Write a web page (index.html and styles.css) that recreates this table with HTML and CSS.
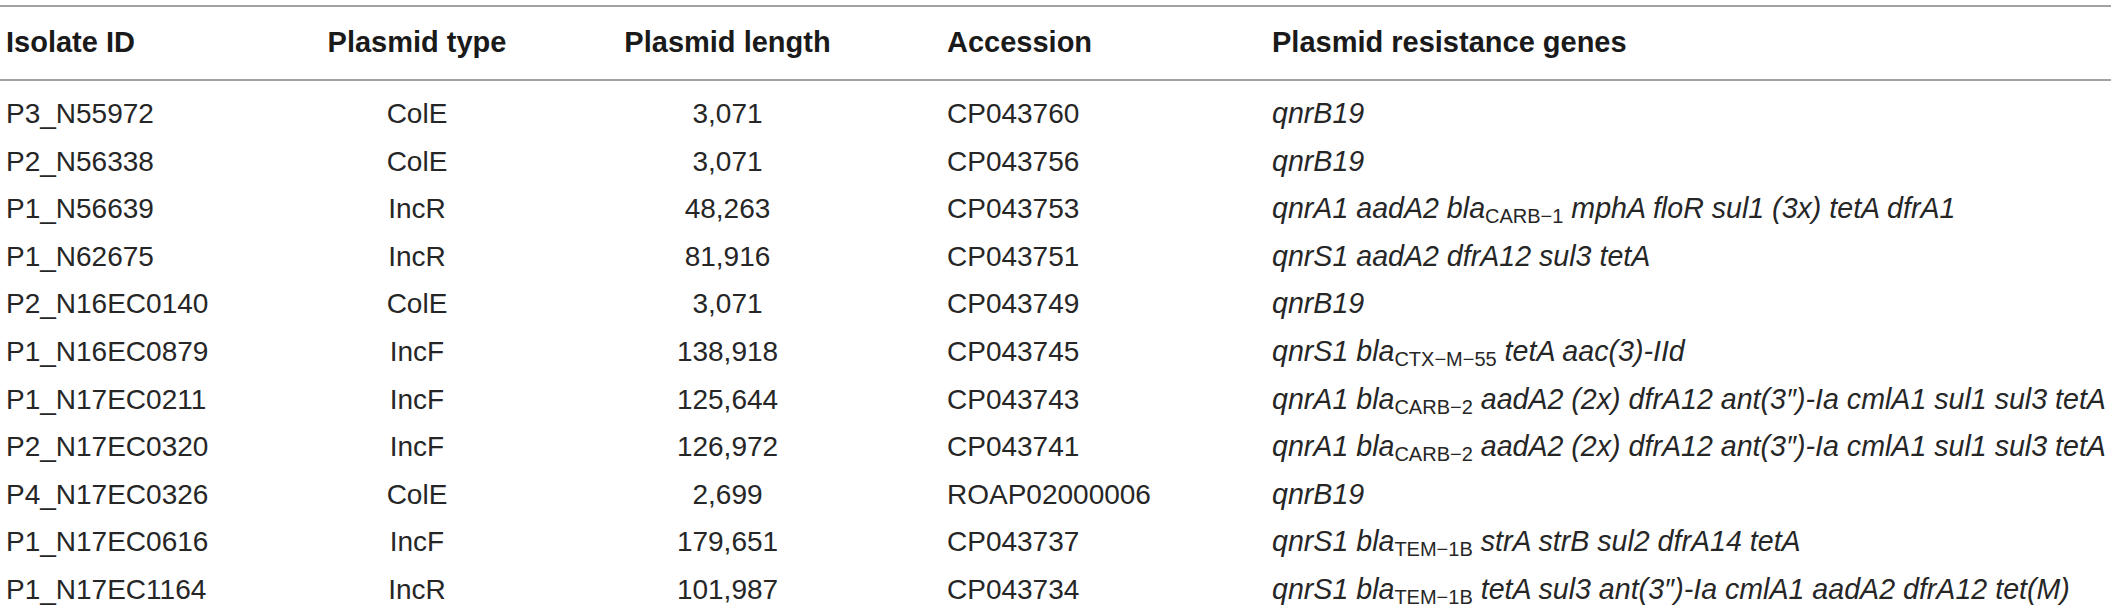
FILE: index.html
```html
<!DOCTYPE html>
<html lang="en">
<head>
<meta charset="utf-8">
<title>Plasmids</title>
<link rel="stylesheet" href="styles.css">
</head>
<body>
<table class="ptable">
  <colgroup>
    <col class="c1"><col class="c2"><col class="c3"><col class="c4"><col class="c5">
  </colgroup>
  <thead>
    <tr>
      <th class="left">Isolate ID</th>
      <th class="center">Plasmid type</th>
      <th class="center">Plasmid length</th>
      <th class="left">Accession</th>
      <th class="left">Plasmid resistance genes</th>
    </tr>
  </thead>
  <tbody>
    <tr><td>P3_N55972</td><td class="center">ColE</td><td class="center">3,071</td><td>CP043760</td><td class="genes">qnrB19</td></tr>
    <tr><td>P2_N56338</td><td class="center">ColE</td><td class="center">3,071</td><td>CP043756</td><td class="genes">qnrB19</td></tr>
    <tr><td>P1_N56639</td><td class="center">IncR</td><td class="center">48,263</td><td>CP043753</td><td class="genes">qnrA1 aadA2 bla<sub>CARB−1</sub> mphA floR sul1 (3x) tetA dfrA1</td></tr>
    <tr><td>P1_N62675</td><td class="center">IncR</td><td class="center">81,916</td><td>CP043751</td><td class="genes">qnrS1 aadA2 dfrA12 sul3 tetA</td></tr>
    <tr><td>P2_N16EC0140</td><td class="center">ColE</td><td class="center">3,071</td><td>CP043749</td><td class="genes">qnrB19</td></tr>
    <tr><td>P1_N16EC0879</td><td class="center">IncF</td><td class="center">138,918</td><td>CP043745</td><td class="genes">qnrS1 bla<sub>CTX−M−55</sub> tetA aac(3)-IId</td></tr>
    <tr><td>P1_N17EC0211</td><td class="center">IncF</td><td class="center">125,644</td><td>CP043743</td><td class="genes">qnrA1 bla<sub>CARB−2</sub> aadA2 (2x) dfrA12 ant(3″)-Ia cmlA1 sul1 sul3 tetA</td></tr>
    <tr><td>P2_N17EC0320</td><td class="center">IncF</td><td class="center">126,972</td><td>CP043741</td><td class="genes">qnrA1 bla<sub>CARB−2</sub> aadA2 (2x) dfrA12 ant(3″)-Ia cmlA1 sul1 sul3 tetA</td></tr>
    <tr><td>P4_N17EC0326</td><td class="center">ColE</td><td class="center">2,699</td><td>ROAP02000006</td><td class="genes">qnrB19</td></tr>
    <tr><td>P1_N17EC0616</td><td class="center">IncF</td><td class="center">179,651</td><td>CP043737</td><td class="genes">qnrS1 bla<sub>TEM−1B</sub> strA strB sul2 dfrA14 tetA</td></tr>
    <tr><td>P1_N17EC1164</td><td class="center">IncR</td><td class="center">101,987</td><td>CP043734</td><td class="genes">qnrS1 bla<sub>TEM−1B</sub> tetA sul3 ant(3″)-Ia cmlA1 aadA2 dfrA12 tet(M)</td></tr>
  </tbody>
</table>
</body>
</html>
```

FILE: styles.css
```css
html, body {
  margin: 0;
  padding: 0;
  background: #ffffff;
}

body {
  font-family: "Liberation Sans", Arial, Helvetica, sans-serif;
  color: #262626;
}

.ptable {
  margin-top: 5px;
  width: 2111px;
  table-layout: fixed;
  border-collapse: collapse;
}

.c1 { width: 320px; }
.c2 { width: 194px; }
.c3 { width: 427px; }
.c4 { width: 325px; }
.c5 { width: 845px; }

.ptable th {
  font-size: 29px;
  font-weight: bold;
  color: #1a1a1a;
  height: 70px;
  padding: 0 6px 2px 6px;
  line-height: 34px;
  border-top: 2px solid #a2a2a2;
  border-bottom: 2px solid #a2a2a2;
  white-space: nowrap;
}

.ptable td {
  font-size: 28px;
  height: 47.6px;
  line-height: 47.6px;
  padding: 0 6px;
  text-align: left;
  white-space: nowrap;
}

.ptable tbody tr:first-child td {
  padding-top: 9px;
}

.ptable .left { text-align: left; }
.ptable .center { text-align: center; }

.ptable td.genes {
  font-style: italic;
  font-size: 28.6px;
}

.genes sub {
  font-style: normal;
  font-size: 20px;
  line-height: 0;
  vertical-align: -5px;
}
```
